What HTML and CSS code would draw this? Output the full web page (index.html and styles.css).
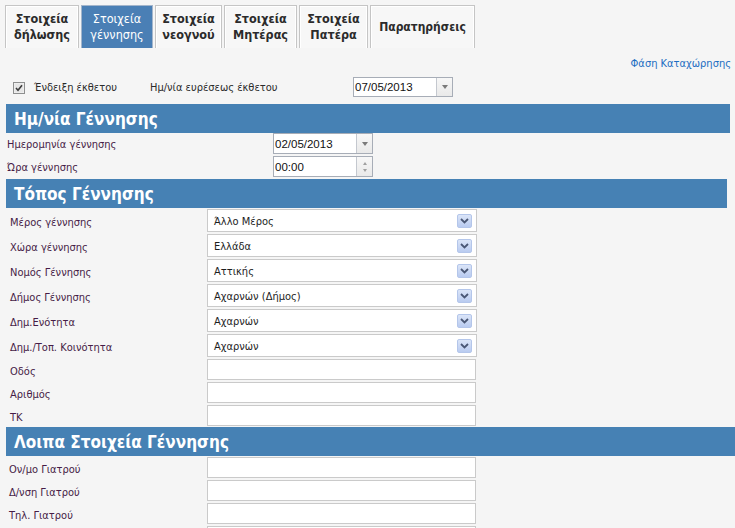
FILE: index.html
```html
<!DOCTYPE html>
<html lang="el">
<head>
<meta charset="utf-8">
<title>Στοιχεία γέννησης</title>
<link rel="stylesheet" href="styles.css">
</head>
<body>
<div class="page">
  <nav class="tabs">
    <div class="tab tab-1">Στοιχεία<br>δήλωσης</div>
    <div class="tab tab-2 active">Στοιχεία<br>γέννησης</div>
    <div class="tab tab-3">Στοιχεία<br>νεογνού</div>
    <div class="tab tab-4">Στοιχεία<br>Μητέρας</div>
    <div class="tab tab-5">Στοιχεία<br>Πατέρα</div>
    <div class="tab tab-6">Παρατηρήσεις</div>
  </nav>

  <div class="phase"><a class="phase-link">Φάση Καταχώρησης</a></div>

  <div class="toprow">
    <span class="checkbox">
      <svg width="12" height="12" viewBox="0 0 12 12"><rect x="0.5" y="0.5" width="11" height="11" fill="#f4f4f4" stroke="#8e8f8f"/><rect x="1.5" y="1.5" width="9" height="9" fill="#e6e6e6"/><path d="M3 6 L5 8.2 L9 3.2" fill="none" stroke="#3c3c3c" stroke-width="1.6"/></svg>
    </span>
    <span class="top-label top-label-1">Ένδειξη έκθετου</span>
    <span class="top-label top-label-2">Ημ/νία ευρέσεως έκθετου</span>
    <span class="datebox datebox-top">
      <span class="datebox-text">07/05/2013</span>
      <span class="datebox-btn"><span class="tri-down"></span></span>
    </span>
  </div>

  <section class="section">
    <h2 class="section-head head-1">Ημ/νία Γέννησης</h2>
    <div class="fields fields-1">
      <label class="flabel">Ημερομηνία γέννησης</label>
      <span class="datebox">
        <span class="datebox-text">02/05/2013</span>
        <span class="datebox-btn"><span class="tri-down"></span></span>
      </span>
      <label class="flabel">Ώρα γέννησης</label>
      <span class="datebox">
        <span class="datebox-text">00:00</span>
        <span class="datebox-btn spin"><span class="tri-up-s"></span><span class="tri-down-s"></span></span>
      </span>
    </div>
  </section>

  <section class="section">
    <h2 class="section-head head-2">Τόπος Γέννησης</h2>
    <div class="fields fields-2">
      <label class="flabel">Μέρος γέννησης</label>
      <span class="select"><span class="select-text">Άλλο Μέρος</span><span class="select-btn"><svg width="9" height="6" viewBox="0 0 9 6"><path d="M1 1 L4.5 4.5 L8 1" fill="none" stroke="#4a5775" stroke-width="1.8"/></svg></span></span>
      <label class="flabel">Χώρα γέννησης</label>
      <span class="select"><span class="select-text">Ελλάδα</span><span class="select-btn"><svg width="9" height="6" viewBox="0 0 9 6"><path d="M1 1 L4.5 4.5 L8 1" fill="none" stroke="#4a5775" stroke-width="1.8"/></svg></span></span>
      <label class="flabel">Νομός Γέννησης</label>
      <span class="select"><span class="select-text">Αττικής</span><span class="select-btn"><svg width="9" height="6" viewBox="0 0 9 6"><path d="M1 1 L4.5 4.5 L8 1" fill="none" stroke="#4a5775" stroke-width="1.8"/></svg></span></span>
      <label class="flabel">Δήμος Γέννησης</label>
      <span class="select"><span class="select-text">Αχαρνών (Δήμος)</span><span class="select-btn"><svg width="9" height="6" viewBox="0 0 9 6"><path d="M1 1 L4.5 4.5 L8 1" fill="none" stroke="#4a5775" stroke-width="1.8"/></svg></span></span>
      <label class="flabel">Δημ.Ενότητα</label>
      <span class="select"><span class="select-text">Αχαρνών</span><span class="select-btn"><svg width="9" height="6" viewBox="0 0 9 6"><path d="M1 1 L4.5 4.5 L8 1" fill="none" stroke="#4a5775" stroke-width="1.8"/></svg></span></span>
      <label class="flabel">Δημ./Τοπ. Κοινότητα</label>
      <span class="select"><span class="select-text">Αχαρνών</span><span class="select-btn"><svg width="9" height="6" viewBox="0 0 9 6"><path d="M1 1 L4.5 4.5 L8 1" fill="none" stroke="#4a5775" stroke-width="1.8"/></svg></span></span>
      <label class="flabel">Οδός</label>
      <span class="textbox"></span>
      <label class="flabel">Αριθμός</label>
      <span class="textbox"></span>
      <label class="flabel">ΤΚ</label>
      <span class="textbox"></span>
    </div>
  </section>

  <section class="section">
    <h2 class="section-head head-3">Λοιπα Στοιχεία Γέννησης</h2>
    <div class="fields fields-3">
      <label class="flabel">Ον/μο Γιατρού</label>
      <span class="textbox"></span>
      <label class="flabel">Δ/νση Γιατρού</label>
      <span class="textbox"></span>
      <label class="flabel">Τηλ. Γιατρού</label>
      <span class="textbox"></span>
      <label class="flabel"></label>
      <span class="textbox"></span>
    </div>
  </section>
</div>
</body>
</html>
```

FILE: styles.css
```css
* { box-sizing: border-box; }

html, body {
  margin: 0;
  padding: 0;
  background: #f5f5f5;
  height: 100%;
  overflow: hidden;
}

body {
  font-family: "DejaVu Sans Condensed", "DejaVu Sans", sans-serif;
  font-size: 11px;
  color: #222;
}

.page {
  padding-top: 5px;
}

/* Tabs */
.tabs {
  display: flex;
  gap: 2px;
  padding-left: 5px;
  height: 43px;
}

.tab {
  height: 43px;
  border: 1px solid #c5c5c5;
  border-bottom: none;
  background: #f7f7f7;
  box-shadow: inset 1px 1px 0 #ffffff, inset -1px 0 0 #ffffff;
  display: flex;
  align-items: center;
  justify-content: center;
  text-align: center;
  font-weight: bold;
  font-size: 12.5px;
  line-height: 16px;
  color: #2b2b2b;
  padding-bottom: 1px;
}

.tab-1 { width: 74px; }
.tab-2 { width: 72px; }
.tab-3 { width: 67px; }
.tab-4 { width: 73px; }
.tab-5 { width: 69px; }
.tab-6 { width: 105px; font-size: 12px; }

.tab.active {
  background: #4a7fb5;
  border-color: #a3b5cb;
  box-shadow: none;
  color: #ffffff;
  font-weight: normal;
}

/* phase link */
.phase {
  margin-top: 9px;
  height: 14px;
  line-height: 14px;
  text-align: right;
  padding-right: 4px;
}

.phase-link {
  color: #1c6dc2;
  font-size: 11px;
}

/* top row */
.toprow {
  margin-top: 6px;
  height: 20px;
  display: flex;
  align-items: center;
  padding-left: 13px;
}

.checkbox {
  width: 12px;
  height: 12px;
  display: flex;
  margin-top: 1px;
}

.top-label {
  color: #2a2a2a;
  padding-top: 1px;
}

.top-label-1 {
  margin-left: 9px;
  width: 116px;
}

.top-label-2 {
  width: 203px;
}

/* date box */
.datebox {
  display: flex;
  height: 21px;
  width: 100px;
  border: 1px solid #a7adb7;
  background: #ffffff;
}

.datebox-top {
  width: 100px;
  height: 20px;
}

.datebox-text {
  flex: 1;
  display: flex;
  align-items: center;
  padding-left: 1px;
  font-family: "Liberation Sans", Arial, sans-serif;
  font-size: 11.5px;
  color: #111;
}

.datebox-btn {
  width: 16px;
  border-left: 1px solid #c4c8cf;
  background: linear-gradient(#f7f7f7, #e9e9e9);
  display: flex;
  align-items: center;
  justify-content: center;
}

.datebox-btn.spin {
  flex-direction: column;
  gap: 4px;
}

.tri-down {
  width: 0;
  height: 0;
  border-left: 3.5px solid transparent;
  border-right: 3.5px solid transparent;
  border-top: 4px solid #7a7a7a;
}

.tri-up-s {
  width: 0;
  height: 0;
  border-left: 2.5px solid transparent;
  border-right: 2.5px solid transparent;
  border-bottom: 3px solid #a0a0a0;
}

.tri-down-s {
  width: 0;
  height: 0;
  border-left: 2.5px solid transparent;
  border-right: 2.5px solid transparent;
  border-top: 3px solid #a0a0a0;
}

/* sections */
.section {
  padding-left: 6px;
}

.section-head {
  margin: 0;
  height: 29px;
  background: #4681b4;
  color: #ffffff;
  font-size: 17px;
  font-weight: bold;
  line-height: 30px;
  padding-left: 8px;
  font-family: "DejaVu Sans Condensed", "DejaVu Sans", sans-serif;
}

.head-1 { margin-top: 7px; margin-right: 5px; }
.head-2 { margin-right: 8px; }
.head-3 { margin-right: 0; }

.fields {
  display: grid;
  row-gap: 2px;
  align-items: center;
}

.fields-1 {
  grid-template-columns: 267px 100px;
  padding-bottom: 2px;
}

.fields-1 .flabel { padding-left: 1px; }

.fields-2 {
  grid-template-columns: 201px 270px;
  padding-top: 1px;
  padding-bottom: 1px;
}

.fields-2 .flabel { padding-left: 4px; padding-top: 4px; }

.fields-3 {
  grid-template-columns: 201px 269px;
  padding-top: 1px;
}

.fields-3 .flabel { padding-left: 3px; padding-top: 3px; }

.flabel {
  color: #461c46;
  white-space: nowrap;
  padding-top: 2px;
}

/* select */
.select {
  height: 23px;
  border: 1px solid #cacaca;
  background: #ffffff;
  display: flex;
  align-items: center;
  padding-left: 6px;
  padding-right: 4px;
}

.select-text {
  flex: 1;
  color: #1d1d1d;
  padding-top: 2px;
}

.select-btn {
  width: 15px;
  height: 14px;
  border: 1px solid #b4c6ea;
  border-radius: 2px;
  background: linear-gradient(#dbe5f8, #b9cbf0);
  display: flex;
  align-items: center;
  justify-content: center;
  padding-top: 1px;
}

/* text box */
.textbox {
  display: block;
  height: 21px;
  border: 1px solid #cacaca;
  background: #ffffff;
  width: 269px;
}
```
